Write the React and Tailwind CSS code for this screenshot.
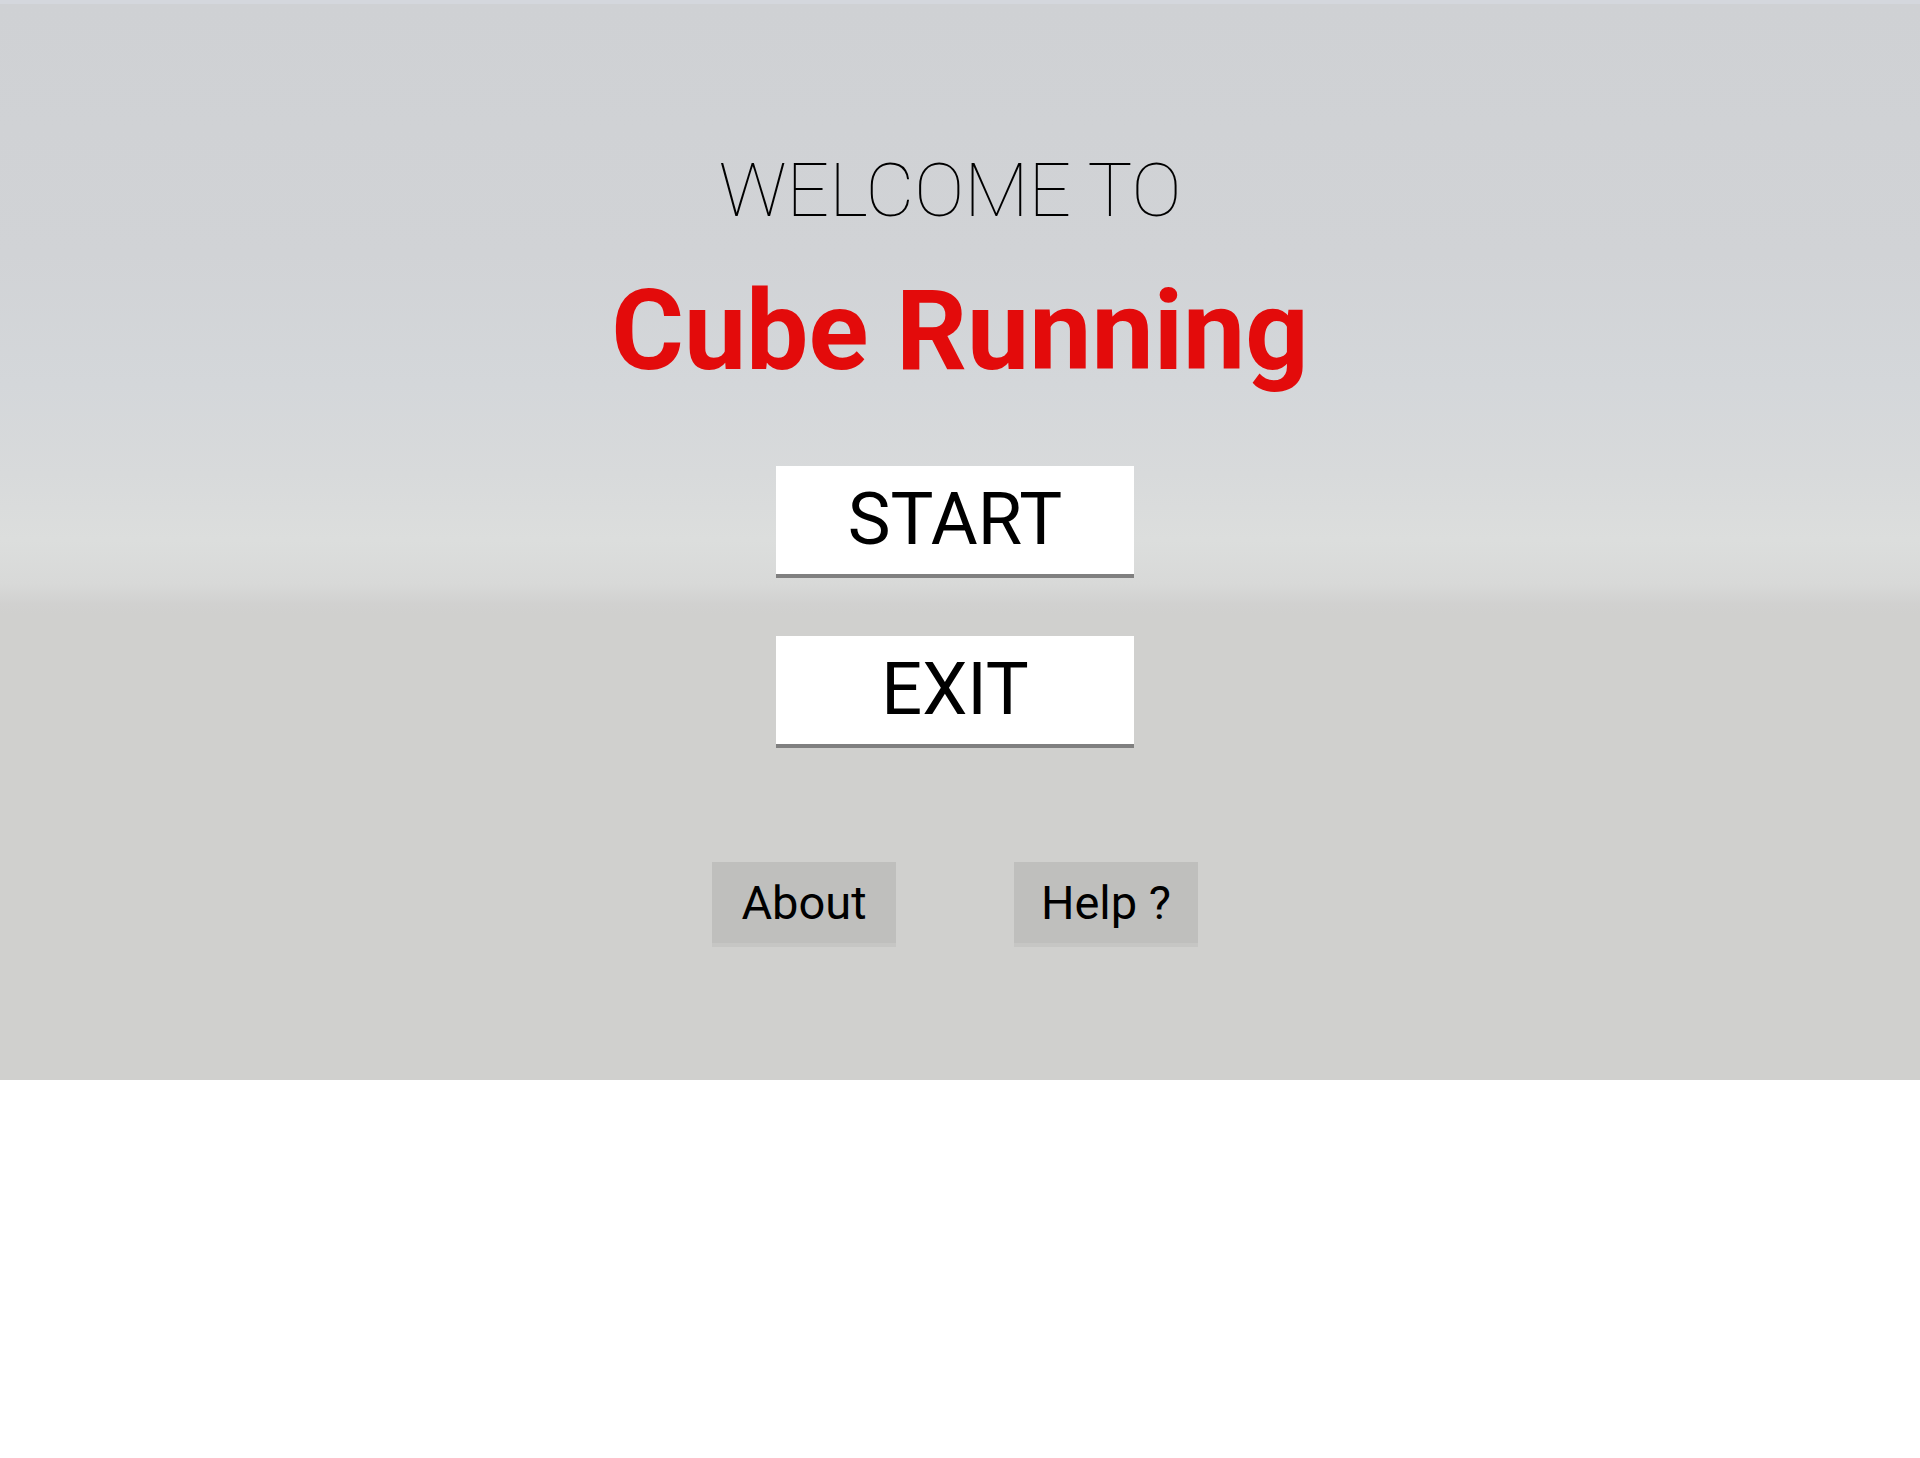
import React from 'react';

const MenuButton = ({ label }) => (
  <button className="w-[358px] h-[112px] bg-white border-b-4 border-[#808080] flex items-center justify-center text-[72px] leading-none text-black">
    {label}
  </button>
);

const SmallButton = ({ label }) => (
  <button className="w-[184px] h-[85px] bg-[#bfbfbd] border-b-4 border-[#c6c6c4] flex items-center justify-center text-[47px] leading-none text-black">
    {label}
  </button>
);

const App = () => {
  return (
    <div className="w-[1920px] min-h-[1458px] bg-white font-['Roboto',sans-serif]">
      <div className="h-[1080px] border-t-4 border-[#d4d7dd] bg-[linear-gradient(to_bottom,#cfd1d4_0px,#d1d3d6_250px,#d4d7da_380px,#d8dadb_470px,#dcdedd_536px,#d8d9d8_580px,#d1d1d0_600px,#d0d0ce_610px,#d0d0ce_100%)] flex flex-col items-center">
        <h2 className="mt-[149px] pr-[20px] text-[75px] leading-none font-thin text-black">WELCOME TO</h2>
        <h1 className="mt-[48px] text-[111px] leading-none font-bold text-[#e30b0b]">Cube Running</h1>

        <div className="mt-[79px] pr-[10px] flex flex-col gap-[58px]">
          <MenuButton label="START" />
          <MenuButton label="EXIT" />
        </div>

        <div className="mt-[114px] pr-[10px] flex gap-[118px]">
          <SmallButton label="About" />
          <SmallButton label="Help ?" />
        </div>
      </div>
    </div>
  );
};

export default App;
